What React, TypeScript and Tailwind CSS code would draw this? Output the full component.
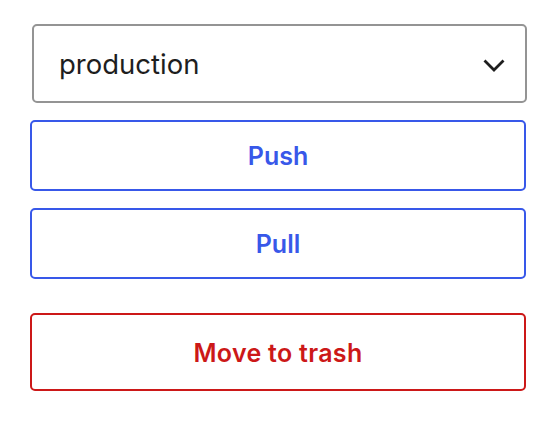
export default function App() {
  return (
    <div className="w-[558px] h-[424px] bg-white pt-[24px] font-['Inter','Liberation_Sans',sans-serif]">
      <div className="ml-[32px] w-[495px] h-[79px] border-2 border-[#949494] rounded-[5px] flex items-center justify-between pl-[25px] pr-[19px]">
        <span className="text-[27.5px] text-[#1e1e1e] leading-none mt-[2px]">production</span>
        <svg width="24" height="14" viewBox="0 0 24 14" fill="none" className="mt-[2px]">
          <path d="M2.5 2.5l9.5 9.5 9.5-9.5" stroke="#1e1e1e" strokeWidth="2.8" />
        </svg>
      </div>
      <div className="ml-[30px] w-[496px] mt-[17px] flex flex-col">
        <button className="h-[71px] pt-[3px] border-2 border-[#3858e9] rounded-[5px] text-[#3858e9] text-[25px] font-semibold">
          Push
        </button>
        <button className="mt-[17px] h-[71px] pt-[3px] border-2 border-[#3858e9] rounded-[5px] text-[#3858e9] text-[25px] font-semibold">
          Pull
        </button>
        <button className="mt-[34px] h-[78px] pt-[3px] border-2 border-[#cc1818] rounded-[5px] text-[#cc1818] text-[25px] font-semibold tracking-[0.3px]">
          Move to trash
        </button>
      </div>
    </div>
  );
}
